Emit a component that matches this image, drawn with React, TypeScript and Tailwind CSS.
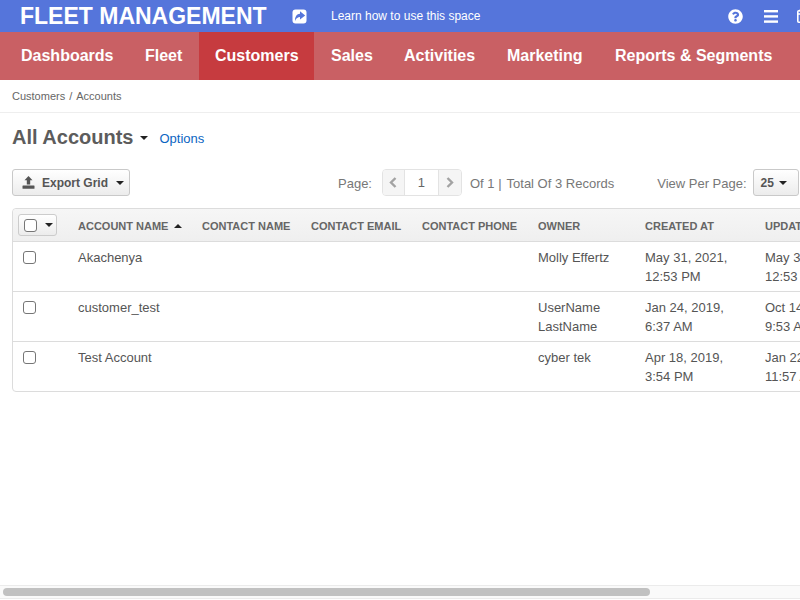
import React from "react";
import { FaQuestionCircle } from "react-icons/fa";

const font = "font-['Liberation_Sans',Arial,sans-serif]";

function Caret({ className = "" }: { className?: string }) {
  return <span className={"inline-block shrink-0 w-0 h-0 border-x-[4px] border-x-transparent border-t-[4px] border-t-[#222] " + className} />;
}

function Box() {
  return <span className="block w-[13px] h-[13px] rounded-[3px] border border-[#767676] bg-white" />;
}

const nav = [
  { t: "Dashboards", w: "w-[114px]", pl: "pl-[21px]" },
  { t: "Fleet", w: "w-[85px]", pl: "pl-[31px]" },
  { t: "Customers", w: "w-[115px]", pl: "pl-[16px]", active: true },
  { t: "Sales", w: "w-[74px]", pl: "pl-[17px]" },
  { t: "Activities", w: "w-[93px]", pl: "pl-[16px]" },
  { t: "Marketing", w: "w-[108px]", pl: "pl-[26px]" },
  { t: "Reports & Segments", w: "w-[201px]", pl: "pl-[26px]" },
];

const cols = ["w-[65px]", "w-[124px]", "w-[109px]", "w-[111px]", "w-[116px]", "w-[107px]", "w-[120px]", "w-[120px]"];

const rows = [
  { name: "Akachenya", owner: ["Molly Effertz"], created: ["May 31, 2021,", "12:53 PM"], updated: ["May 31, 2021,", "12:53 PM"] },
  { name: "customer_test", owner: ["UserName", "LastName"], created: ["Jan 24, 2019,", "6:37 AM"], updated: ["Oct 14, 2019,", "9:53 AM"] },
  { name: "Test Account", owner: ["cyber tek"], created: ["Apr 18, 2019,", "3:54 PM"], updated: ["Jan 22, 2020,", "11:57 AM"] },
];

export default function App() {
  return (
    <div className={"w-[800px] h-[600px] overflow-hidden bg-white flex flex-col " + font}>
      <header className="h-[32px] shrink-0 bg-[#5575db] flex items-center text-white overflow-hidden">
        <span className="ml-[20px] w-[272px] shrink-0 text-[23px] leading-[32px] font-bold whitespace-nowrap">FLEET MANAGEMENT</span>
        <svg width="15" height="15" viewBox="0 0 15 15" className="shrink-0">
          <rect x="0.5" y="0.5" width="14" height="14" rx="3" fill="#fff" />
          <path d="M8 2.2 13.2 6.4 8 10.6V8C6 8 4.2 9 3 12 2.8 7.8 4.8 5 8 4.8Z" fill="#5575db" />
        </svg>
        <span className="ml-[24px] w-[397px] shrink-0 text-[12px] whitespace-nowrap">Learn how to use this space</span>
        <FaQuestionCircle className="w-[15px] h-[15px] shrink-0" />
        <svg width="14" height="13" viewBox="0 0 14 13" className="ml-[21px] shrink-0" fill="#fff">
          <rect x="0" y="0" width="14" height="2.4" />
          <rect x="0" y="5.2" width="14" height="2.4" />
          <rect x="0" y="10.4" width="14" height="2.4" />
        </svg>
        <svg width="13" height="14" viewBox="0 0 13 14" className="ml-[19px] shrink-0" fill="none" stroke="#fff" strokeWidth="1.6">
          <rect x="0.8" y="1.8" width="11.4" height="11.4" rx="1" />
          <path d="M0.8 5H12.2M3.5 0V3M9.5 0V3" />
        </svg>
      </header>

      <nav className="h-[48px] shrink-0 bg-[#c96064] flex text-white text-[16px] font-bold">
        {nav.map((n) => (
          <div key={n.t} className={`${n.w} ${n.pl} shrink-0 flex items-center whitespace-nowrap ${n.active ? "bg-[#c63b3f]" : ""}`}>
            {n.t}
          </div>
        ))}
      </nav>

      <div className="h-[33px] shrink-0 border-b border-[#eeeeee] pl-[12px] flex items-center text-[11px] text-[#666]">
        <span>Customers</span>
        <span className="mx-[4px]">/</span>
        <span>Accounts</span>
      </div>

      <div className="h-[46px] shrink-0 pl-[12px] flex items-center pt-[2px]">
        <span className="text-[20px] font-bold text-[#5c5c5c]">All Accounts</span>
        <Caret className="ml-[6px] mt-[2px]" />
        <span className="ml-[12px] mt-[3px] text-[13px] text-[#0b65c2]">Options</span>
      </div>

      <div className="h-[27px] mt-[10px] shrink-0 flex items-center text-[13px] text-[#777] pl-[12px] whitespace-nowrap">
        <div className="w-[118px] h-[27px] shrink-0 rounded-[3px] border border-[#c9c9c9] bg-gradient-to-b from-white to-[#ececec] flex items-center pl-[9px] text-[12px] font-bold text-[#555]">
          <svg width="13" height="13" viewBox="0 0 13 13" className="shrink-0" fill="#555">
            <path d="M6.5 0 10.5 4.2H8.2V8.4H4.8V4.2H2.5Z" />
            <rect x="0.5" y="9.6" width="12" height="3.2" rx="0.5" />
          </svg>
          <span className="ml-[7px]">Export Grid</span>
          <Caret className="ml-[8px]" />
        </div>
        <span className="ml-[208px] translate-y-[1px]">Page:</span>
        <div className="ml-[10px] w-[80px] h-[27px] shrink-0 rounded-[4px] border border-[#e3e3e3] flex items-center overflow-hidden">
          <div className="w-[21px] h-full shrink-0 bg-[#f5f5f5] flex items-center justify-center">
            <svg width="8" height="11" viewBox="0 0 8 11" fill="none" stroke="#a3a3a3" strokeWidth="2.4"><path d="M6.5 1 2 5.5 6.5 10" /></svg>
          </div>
          <div className="w-[35px] h-full shrink-0 bg-white border-x border-[#e3e3e3] flex items-center justify-center text-[#666] text-[13px]">1</div>
          <div className="flex-1 h-full bg-[#f5f5f5] flex items-center justify-center">
            <svg width="8" height="11" viewBox="0 0 8 11" fill="none" stroke="#a3a3a3" strokeWidth="2.4"><path d="M1.5 1 6 5.5 1.5 10" /></svg>
          </div>
        </div>
        <span className="ml-[8px] translate-y-[1px]">Of 1 |</span>
        <span className="ml-[5px] translate-y-[1px]">Total Of 3 Records</span>
        <span className="ml-[43px] translate-y-[1px]">View Per Page:</span>
        <div className="ml-[6px] w-[46px] h-[27px] shrink-0 rounded-[3px] border border-[#c9c9c9] bg-gradient-to-b from-white to-[#ececec] flex items-center pl-[7px] text-[12px] font-bold text-[#555]">
          25
          <Caret className="ml-[5px]" />
        </div>
      </div>

      <div className="mt-[12px] ml-[12px] w-[900px] shrink-0 rounded-[4px] border border-[#dcdcdc] text-[13px] text-[#555]">
        <div className="h-[33px] flex items-center bg-gradient-to-b from-[#f6f6f6] to-[#efefef] border-b border-[#dcdcdc] text-[11px] font-bold text-[#666] rounded-t-[4px]">
          <div className={cols[0] + " shrink-0 pl-[5px]"}>
            <div className="w-[39px] h-[22px] rounded-[3px] border border-[#cccccc] bg-gradient-to-b from-white to-[#ececec] flex items-center pl-[5px]">
              <Box />
              <Caret className="ml-[8px]" />
            </div>
          </div>
          <div className={cols[1] + " shrink-0 flex items-center translate-y-[1px]"}>ACCOUNT NAME<span className="ml-[6px] w-0 h-0 border-x-[4px] border-x-transparent border-b-[4px] border-b-[#222]" /></div>
          <div className={cols[2] + " shrink-0 translate-y-[1px]"}>CONTACT NAME</div>
          <div className={cols[3] + " shrink-0 translate-y-[1px]"}>CONTACT EMAIL</div>
          <div className={cols[4] + " shrink-0 translate-y-[1px]"}>CONTACT PHONE</div>
          <div className={cols[5] + " shrink-0 translate-y-[1px]"}>OWNER</div>
          <div className={cols[6] + " shrink-0 translate-y-[1px]"}>CREATED AT</div>
          <div className={cols[7] + " shrink-0 translate-y-[1px]"}>UPDATED AT</div>
        </div>
        {rows.map((r, i) => (
          <div key={r.name} className={"flex items-start pt-[6px] leading-[19px] " + (i < 2 ? "h-[50px] border-b border-[#dcdcdc]" : "h-[49px]")}>
            <div className={cols[0] + " shrink-0 pl-[10px] pt-[3px]"}><Box /></div>
            <div className={cols[1] + " shrink-0"}>{r.name}</div>
            <div className={cols[2] + " shrink-0"} />
            <div className={cols[3] + " shrink-0"} />
            <div className={cols[4] + " shrink-0"} />
            <div className={cols[5] + " shrink-0"}>{r.owner.map((x) => <div key={x}>{x}</div>)}</div>
            <div className={cols[6] + " shrink-0"}>{r.created.map((x) => <div key={x}>{x}</div>)}</div>
            <div className={cols[7] + " shrink-0"}>{r.updated.map((x) => <div key={x}>{x}</div>)}</div>
          </div>
        ))}
      </div>

      <div className="mt-auto mb-[1px] h-[14px] shrink-0 bg-[#fafafa] border-y border-[#ebebeb] flex items-center pl-[3px]">
        <div className="w-[647px] h-[8px] rounded-full bg-[#c1c1c1]" />
      </div>
    </div>
  );
}
